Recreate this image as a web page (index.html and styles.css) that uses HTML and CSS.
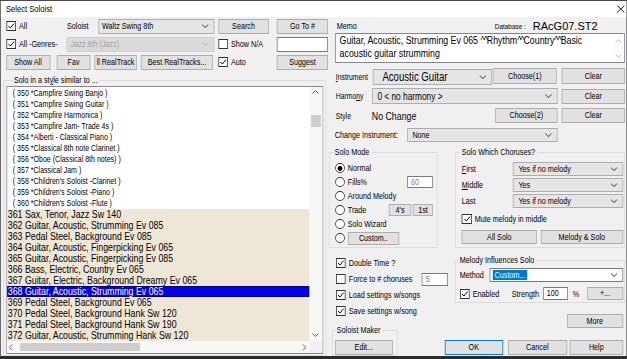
FILE: index.html
```html
<!doctype html>
<html lang="en">
  <head>
    <meta charset="UTF-8" />
    <title>Select Soloist</title>
    <link rel="stylesheet" href="styles.css">
  </head>
  <body>
    <div class="screen">
    <div class="window">
      <div class="titlebar">
        <span class="title">Select Soloist</span>
        <svg class="close" viewBox="0 0 10 8" preserveAspectRatio="none"><path d="M0.5 0.5 L9.5 7.5 M9.5 0.5 L0.5 7.5" /></svg>
      </div>

      <div class="dialog">
        <!-- left: filters + soloist list -->
        <div class="col-left">
          <div class="row top-row">
            <label class="chk all-chk"><span class="box"><svg viewBox="0 0 10 10" preserveAspectRatio="none"><polyline points="1.5,5 4,7.5 8.5,2" /></svg></span>All</label>
            <span class="soloist-lbl">Soloist</span>
            <div class="combo soloist-combo"><span class="val">Waltz Swing 8th</span><svg class="chev" viewBox="0 0 7 4" preserveAspectRatio="none"><polyline points="0.5,0.5 3.5,3.5 6.5,0.5" /></svg></div>
            <button class="btn search-btn">Search</button>
            <button class="btn goto-btn">Go To #</button>
          </div>
          <div class="row top-row">
            <label class="chk genres-chk"><span class="box"><svg viewBox="0 0 10 10" preserveAspectRatio="none"><polyline points="1.5,5 4,7.5 8.5,2" /></svg></span>All -Genres-</label>
            <div class="combo disabled genre-combo"><span class="val">Jazz 8th (Jazz)</span><svg class="chev" viewBox="0 0 7 4" preserveAspectRatio="none"><polyline points="0.5,0.5 3.5,3.5 6.5,0.5" /></svg></div>
            <label class="chk na-chk"><span class="box"></span>Show N/A</label>
            <div class="field goto-field"></div>
          </div>
          <div class="row top-row">
            <button class="btn showall-btn">Show All</button>
            <button class="btn fav-btn">Fav</button>
            <button class="btn rt-btn">ll RealTrack</button>
            <button class="btn best-btn">Best RealTracks...</button>
            <label class="chk auto-chk"><span class="box"><svg viewBox="0 0 10 10" preserveAspectRatio="none"><polyline points="1.5,5 4,7.5 8.5,2" /></svg></span>Auto</label>
            <button class="btn suggest-btn">Suggest</button>
          </div>

          <fieldset class="group list-group">
            <legend>Solo in a st<u>y</u>le similar to ...</legend>
            <div class="list-wrap">
              <div class="listbox">
                <div class="items">
                  <div class="item old">( 350 *Campfire Swing Banjo )</div>
                  <div class="item old">( 351 *Campfire Swing Guitar )</div>
                  <div class="item old">( 352 *Campfire Harmonica )</div>
                  <div class="item old">( 353 *Campfire Jam- Trade 4s )</div>
                  <div class="item old">( 354 *Alberti - Classical Piano )</div>
                  <div class="item old">( 355 *Classical 8th note Clarinet )</div>
                  <div class="item old">( 356 *Oboe (Classical 8th notes) )</div>
                  <div class="item old">( 357 *Classical Jam )</div>
                  <div class="item old">( 358 *Children's Soloist -Clarinet )</div>
                  <div class="item old">( 359 *Children's Soloist -Piano )</div>
                  <div class="item old">( 360 *Children's Soloist -Flute )</div>
                  <div class="item rt">361 Sax, Tenor, Jazz Sw 140</div>
                  <div class="item rt">362 Guitar, Acoustic, Strumming Ev 085</div>
                  <div class="item rt">363 Pedal Steel, Background Ev 085</div>
                  <div class="item rt">364 Guitar, Acoustic, Fingerpicking Ev 065</div>
                  <div class="item rt">365 Guitar, Acoustic, Fingerpicking Ev 085</div>
                  <div class="item rt">366 Bass, Electric, Country Ev 065</div>
                  <div class="item rt">367 Guitar, Electric, Background Dreamy Ev 065</div>
                  <div class="item rt selected">368 Guitar, Acoustic, Strumming Ev 065</div>
                  <div class="item rt">369 Pedal Steel, Background Ev 065</div>
                  <div class="item rt">370 Pedal Steel, Background Hank Sw 120</div>
                  <div class="item rt">371 Pedal Steel, Background Hank Sw 190</div>
                  <div class="item rt">372 Guitar, Acoustic, Strumming Hank Sw 120</div>
                </div>
                <div class="vscroll">
                  <svg class="arrow-v" viewBox="0 0 7 4" preserveAspectRatio="none"><polyline points="0.5,3.5 3.5,0.5 6.5,3.5" /></svg>
                  <div class="vthumb"></div>
                  <svg class="arrow-v" viewBox="0 0 7 4" preserveAspectRatio="none"><polyline points="0.5,0.5 3.5,3.5 6.5,0.5" /></svg>
                </div>
                <div class="hscroll">
                  <svg class="arrow-h" viewBox="0 0 4 7" preserveAspectRatio="none"><polyline points="3.5,0.5 0.5,3.5 3.5,6.5" /></svg>
                  <div class="hthumb"></div>
                  <svg class="arrow-h" viewBox="0 0 4 7" preserveAspectRatio="none"><polyline points="0.5,0.5 3.5,3.5 0.5,6.5" /></svg>
                </div>
                <div class="corner"></div>
              </div>
            </div>
          </fieldset>
        </div>

        <!-- right: memo + settings -->
        <div class="col-right">
          <div class="row memo-head">
            <span class="memo-lbl">Memo</span>
            <span class="db-lbl">Database :</span>
            <span class="db-val">RAcG07.ST2</span>
          </div>
          <div class="memo">
            <div class="memo-text">Guitar, Acoustic, Strumming Ev 065 <span class="hat">^^</span>Rhythm<span class="hat">^^</span>Country<span class="hat">^^</span>Basic<br>acoustic guitar strumming</div>
            <div class="memo-scroll">
              <svg class="arrow-v" viewBox="0 0 7 4" preserveAspectRatio="none"><polyline points="0.5,3.5 3.5,0.5 6.5,3.5" /></svg>
              <svg class="arrow-v" viewBox="0 0 7 4" preserveAspectRatio="none"><polyline points="0.5,0.5 3.5,3.5 6.5,0.5" /></svg>
            </div>
          </div>

          <div class="row instr-row">
            <span class="side-lbl instr-lbl"><u>I</u>nstrument</span>
            <div class="combo instr-combo"><span class="val">Acoustic Guitar</span><svg class="chev" viewBox="0 0 7 4" preserveAspectRatio="none"><polyline points="0.5,0.5 3.5,3.5 6.5,0.5" /></svg></div>
            <button class="btn choose1-btn">Choose(1)</button>
            <button class="btn clear-btn">Clear</button>
          </div>
          <div class="row harm-row">
            <span class="side-lbl">Harmo<u>n</u>y</span>
            <div class="combo harm-combo"><span class="val">0 &lt; no harmony &gt;</span><svg class="chev" viewBox="0 0 7 4" preserveAspectRatio="none"><polyline points="0.5,0.5 3.5,3.5 6.5,0.5" /></svg></div>
            <button class="btn clear-btn">Clear</button>
          </div>
          <div class="row style-row">
            <span class="side-lbl">Style</span>
            <span class="style-val">No Change</span>
            <button class="btn choose2-btn">Choose(2)</button>
            <button class="btn clear-btn">Clear</button>
          </div>
          <div class="row change-row">
            <span class="change-lbl">Change Instrument:</span>
            <div class="combo change-combo"><span class="val">None</span><svg class="chev" viewBox="0 0 7 4" preserveAspectRatio="none"><polyline points="0.5,0.5 3.5,3.5 6.5,0.5" /></svg></div>
          </div>

          <div class="middle">
            <fieldset class="group mode-group">
              <legend>Solo Mode</legend>
              <div class="mode-body">
                <div class="opt"><span class="radio on"></span>Normal</div>
                <div class="opt"><span class="radio"></span>Fills%<span class="field fills-field">60</span></div>
                <div class="opt"><span class="radio"></span>Around Melody</div>
                <div class="opt"><span class="radio"></span>Trade<button class="btn mini fours-btn">4's</button><button class="btn mini first-btn">1st</button></div>
                <div class="opt"><span class="radio"></span>Solo Wizard</div>
                <div class="opt"><span class="radio"></span><button class="btn custom-btn">Custom..</button></div>
              </div>
            </fieldset>

            <fieldset class="group chorus-group">
              <legend>Solo Which Choruses?</legend>
              <div class="chorus-body">
                <div class="crow"><span class="clbl"><u>F</u>irst</span><div class="combo chorus-combo"><span class="val">Yes if no melody</span><svg class="chev" viewBox="0 0 7 4" preserveAspectRatio="none"><polyline points="0.5,0.5 3.5,3.5 6.5,0.5" /></svg></div></div>
                <div class="crow"><span class="clbl"><u>M</u>iddle</span><div class="combo chorus-combo"><span class="val">Yes</span><svg class="chev" viewBox="0 0 7 4" preserveAspectRatio="none"><polyline points="0.5,0.5 3.5,3.5 6.5,0.5" /></svg></div></div>
                <div class="crow"><span class="clbl">Last</span><div class="combo chorus-combo"><span class="val">Yes if no melody</span><svg class="chev" viewBox="0 0 7 4" preserveAspectRatio="none"><polyline points="0.5,0.5 3.5,3.5 6.5,0.5" /></svg></div></div>
                <label class="chk mute-chk"><span class="box"><svg viewBox="0 0 10 10" preserveAspectRatio="none"><polyline points="1.5,5 4,7.5 8.5,2" /></svg></span>Mute melody in middle</label>
                <div class="chorus-btns">
                  <button class="btn allsolo-btn">All Solo</button>
                  <button class="btn melsolo-btn">Melody &amp; Solo</button>
                </div>
              </div>
            </fieldset>
          </div>

          <div class="lower">
            <div class="lower-left">
              <label class="chk opt2"><span class="box"><svg viewBox="0 0 10 10" preserveAspectRatio="none"><polyline points="1.5,5 4,7.5 8.5,2" /></svg></span>Double Time ?</label>
              <label class="chk opt2"><span class="box"></span>Force to # choruses<span class="field force-field">5</span></label>
              <label class="chk opt2"><span class="box"><svg viewBox="0 0 10 10" preserveAspectRatio="none"><polyline points="1.5,5 4,7.5 8.5,2" /></svg></span>Load settings w/songs</label>
              <label class="chk opt2"><span class="box"><svg viewBox="0 0 10 10" preserveAspectRatio="none"><polyline points="1.5,5 4,7.5 8.5,2" /></svg></span>Save settings w/song</label>
              <fieldset class="group maker-group">
                <legend>Soloist Maker</legend>
                <div class="maker-body"><button class="btn edit-btn">Edit...</button></div>
              </fieldset>
            </div>

            <div class="lower-right">
              <fieldset class="group melody-group">
                <legend>Melody Influences Solo</legend>
                <div class="melody-body">
                  <div class="row method-row">
                    <span class="method-lbl">Method</span>
                    <div class="combo edit-combo"><span class="val"><span class="hilite">Custom...</span></span><svg class="chev" viewBox="0 0 7 4" preserveAspectRatio="none"><polyline points="0.5,0.5 3.5,3.5 6.5,0.5" /></svg></div>
                  </div>
                  <div class="row enabled-row">
                    <label class="chk enabled-chk"><span class="box"><svg viewBox="0 0 10 10" preserveAspectRatio="none"><polyline points="1.5,5 4,7.5 8.5,2" /></svg></span>Enabled</label>
                    <span class="strength-lbl">Strength</span>
                    <span class="field strength-field">100</span>
                    <span class="pct">%</span>
                    <button class="btn plus-btn">+...</button>
                  </div>
                </div>
              </fieldset>
              <button class="btn more-btn">More</button>
              <div class="final-btns">
                <button class="btn default ok-btn">OK</button>
                <button class="btn cancel-btn">Cancel</button>
                <button class="btn help-btn">Help</button>
              </div>
            </div>
          </div>
        </div>
      </div>
    </div>
    </div>
  </body>
</html>
```

FILE: styles.css
```css
* {
  box-sizing: border-box;
}
body {
  margin: 0;
  background: #fff;
  font-family: "Liberation Sans", Arial, sans-serif;
  font-size: 9px;
  color: #000;
  overflow: hidden;
}
u {
  text-decoration-thickness: 1px;
}
.screen {
  width: 627px;
  height: 359px;
  overflow: hidden;
}

/* the dialog is drawn with the narrow look of the capture: laid out 25% wider, then squeezed */
.window {
  width: 783.75px;
  height: 359px;
  border: 1px solid #4a4a4a;
  border-bottom: 3px solid #2b2b2b;
  background: #f0f0f0;
  overflow: hidden;
  display: flex;
  flex-direction: column;
  white-space: nowrap;
  transform: scaleX(0.8);
  transform-origin: 0 0;
}
.titlebar {
  flex: none;
  height: 16px;
  background: #fff;
  display: flex;
  align-items: center;
  justify-content: space-between;
  padding: 0 2px 1px 6.5px;
}
.title {
  font-size: 9.5px;
}
.close {
  width: 10px;
  height: 8px;
  stroke: #000;
  stroke-width: 1;
  fill: none;
  margin-top: 1px;
}
.dialog {
  flex: 1;
  display: flex;
  min-height: 0;
}
.col-left {
  width: 410px;
  flex: none;
  display: flex;
  flex-direction: column;
}
.col-right {
  width: 371.75px;
  flex: none;
  display: flex;
  flex-direction: column;
}
.row {
  display: flex;
  align-items: center;
  flex: none;
}

/* common controls */
.btn {
  font: inherit;
  height: 15px;
  padding: 0;
  border: 1px solid #adadad;
  background: #e1e1e1;
  color: #000;
  line-height: 13px;
  text-align: center;
  white-space: nowrap;
  overflow: hidden;
  flex: none;
}
.btn.default {
  border-color: #0078d7;
}
.combo {
  flex: none;
  display: flex;
  align-items: center;
  height: 15px;
  border: 1px solid #adadad;
  background: #e5e5e5;
}
.combo .val {
  flex: 1;
  padding-left: 5px;
  overflow: hidden;
}
.combo.disabled {
  background: #dadada;
  border-color: #cfcfcf;
  color: #a0a0a0;
}
.chev {
  flex: none;
  width: 9px;
  height: 4px;
  margin-right: 6px;
  fill: none;
  stroke: #606060;
  stroke-width: 1;
}
.combo.disabled .chev {
  stroke: #b8b8b8;
}
.field {
  flex: none;
  height: 15px;
  border: 1px solid #7a7a7a;
  background: #fff;
  padding-left: 4px;
  line-height: 13px;
  color: #808080;
}
.chk {
  display: flex;
  align-items: center;
  flex: none;
}
.box {
  flex: none;
  width: 12.5px;
  height: 10px;
  border: 1px solid #333;
  background: #fff;
  margin-right: 3.75px;
  display: flex;
  align-items: center;
  justify-content: center;
}
.box svg {
  width: 10px;
  height: 8px;
  fill: none;
  stroke: #000;
  stroke-width: 1.2;
}
.radio {
  flex: none;
  width: 12.5px;
  height: 10px;
  border: 1px solid #333;
  border-radius: 50%;
  background: #fff;
  margin-right: 3.75px;
  display: flex;
  align-items: center;
  justify-content: center;
}
.radio.on::after {
  content: "";
  width: 6.25px;
  height: 5px;
  border-radius: 50%;
  background: #000;
}
.group {
  margin: 0;
  padding: 0;
  border: 1px solid #dcdcdc;
  min-width: 0;
  flex: none;
}
.group legend {
  padding: 0 2px;
  height: 10px;
  line-height: 10px;
}

/* top filter rows */
.top-row {
  height: 16px;
  margin-top: 2px;
}
.top-row:first-child {
  margin-top: 1px;
}
.all-chk {
  margin-left: 6.5px;
  width: 76.25px;
}
.soloist-lbl {
  width: 38.75px;
  flex: none;
}
.soloist-combo {
  width: 145px;
}
.soloist-combo .val {
  padding-left: 4px;
}
.search-btn {
  margin-left: 5px;
  width: 63.75px;
}
.goto-btn {
  margin-left: 10px;
  width: 63.75px;
}
.genres-chk {
  margin-left: 6.5px;
  width: 75px;
}
.genre-combo {
  width: 185px;
}
.na-chk {
  margin-left: 5px;
  width: 73.75px;
}
.goto-field {
  width: 63.75px;
}
.showall-btn {
  margin-left: 6.5px;
  width: 55px;
}
.fav-btn {
  margin-left: 8.75px;
  width: 41.25px;
}
.rt-btn {
  margin-left: 5px;
  width: 53.75px;
}
.best-btn {
  margin-left: 5px;
  width: 90px;
}
.auto-chk {
  margin-left: 6.25px;
  width: 73.75px;
}
.suggest-btn {
  width: 63.75px;
}

/* soloist list */
.list-group {
  margin: 5px 0 0 2.75px;
  width: 403.75px;
}
.list-group legend {
  margin-left: 10.75px;
}
.list-wrap {
  padding: 1px 2.75px 1px;
}
.listbox {
  border: 1px solid #828790;
  background: #fff;
  display: grid;
  grid-template-columns: 1fr 16.25px;
  grid-template-rows: 254px 12px;
}
.items {
  padding-top: 1px;
  overflow: hidden;
}
.item {
  height: 11px;
  line-height: 11px;
  font-size: 8.8px;
  padding-left: 1.25px;
}
.item.old {
  padding-left: 7.5px;
}
.item.rt {
  background: #efe7d6;
  font-size: 11px;
}
.item.selected {
  background: #0000f5;
  color: #fff;
  box-shadow: inset 0 0 0 1px #00007a;
}
.vscroll {
  background: #f7f7f7;
  display: flex;
  flex-direction: column;
  align-items: center;
  padding: 3px 0 4px;
}
.vthumb {
  width: 12px;
  height: 12px;
  background: #cdcdcd;
  margin: 21px 0 auto;
}
.arrow-v {
  width: 8.75px;
  height: 4px;
  fill: none;
  stroke: #606060;
  stroke-width: 1;
}
.hscroll {
  background: #f7f7f7;
  display: flex;
  align-items: center;
  padding: 0 3.75px 0 2px;
}
.hthumb {
  width: 150px;
  height: 8px;
  background: #cdcdcd;
  margin: 0 auto 0 9.25px;
}
.arrow-h {
  width: 5px;
  height: 7px;
  fill: none;
  stroke: #606060;
  stroke-width: 1;
}
.corner {
  background: #f0f0f0;
}

/* memo */
.memo-head {
  height: 14px;
  margin-top: 2px;
}
.memo-lbl {
  margin-left: 10px;
  width: 197.5px;
  flex: none;
}
.db-lbl {
  width: 47.5px;
  flex: none;
  font-size: 8px;
}
.db-val {
  display: inline-block;
  font-size: 11px;
  transform: scaleX(1.25);
  transform-origin: 0 50%;
}
.memo {
  margin-left: 7.5px;
  width: 362.5px;
  height: 30px;
  flex: none;
  border: 1px solid #828790;
  background: #fff;
  display: flex;
}
.memo-text {
  flex: 1;
  padding-left: 5px;
  font-size: 11px;
  line-height: 13px;
}
.hat {
  letter-spacing: -1.2px;
}
.memo-scroll {
  width: 13.75px;
  display: flex;
  flex-direction: column;
  justify-content: space-between;
  align-items: center;
  padding: 5px 0 4px;
}
.memo-scroll .arrow-v {
  stroke: #b8b8b8;
}

/* instrument / harmony / style */
.side-lbl {
  margin-left: 8.75px;
  width: 45px;
  flex: none;
  font-size: 8.5px;
}
.instr-row {
  margin-top: 5px;
  height: 17px;
  align-items: flex-start;
}
.instr-lbl {
  width: 46.25px;
  align-self: center;
}
.instr-combo {
  width: 148.75px;
  height: 16px;
  margin-top: 1px;
  font-size: 12px;
}
.instr-combo .val {
  padding-left: 11px;
}
.choose1-btn {
  margin-left: 1.25px;
  width: 80px;
  height: 16px;
}
.clear-btn {
  margin-left: 5px;
  width: 78.75px;
}
.instr-row .clear-btn {
  margin-left: 6.25px;
  height: 16px;
}
.harm-row {
  margin-top: 3px;
  height: 16px;
}
.harm-combo {
  width: 232.5px;
  height: 16px;
  font-size: 10.4px;
}
.harm-combo .val {
  padding-left: 6px;
}
.style-row {
  margin-top: 4px;
  height: 15px;
}
.style-val {
  width: 153.75px;
  flex: none;
  font-size: 11px;
}
.choose2-btn {
  width: 78.75px;
}
.change-row {
  margin-top: 5px;
  height: 14px;
}
.change-lbl {
  margin-left: 7.5px;
  width: 90px;
  flex: none;
}
.change-combo {
  width: 188.75px;
  height: 14px;
}
.change-combo .val {
  padding-left: 6px;
}

/* solo mode + choruses */
.middle {
  margin-top: 5px;
  display: flex;
  flex: none;
}
.mode-group {
  width: 136.25px;
}
.mode-group legend {
  margin-left: 4.5px;
}
.mode-body {
  padding: 4px 5px 2px 6.5px;
}
.opt {
  height: 14px;
  display: flex;
  align-items: center;
}
.fills-field {
  margin-left: auto;
  width: 32.5px;
  height: 12px;
  line-height: 10px;
}
.btn.mini {
  height: 12px;
  line-height: 10px;
}
.fours-btn {
  margin-left: auto;
  width: 27.5px;
}
.first-btn {
  margin-left: 2.5px;
  width: 25px;
}
.custom-btn {
  width: 63.75px;
  height: 13px;
  line-height: 11px;
}
.chorus-group {
  margin-left: 21.25px;
  width: 212.5px;
}
.chorus-group legend {
  margin-left: 5.75px;
}
.chorus-body {
  padding: 4px 1.25px 3px 7.75px;
}
.crow {
  height: 16px;
  display: flex;
  align-items: center;
}
.clbl {
  width: 63.75px;
  flex: none;
}
.chorus-combo {
  width: 137.5px;
  height: 14px;
}
.chorus-combo .val {
  padding-left: 6px;
}
.mute-chk {
  margin-top: 3px;
  height: 14px;
}
.chorus-btns {
  margin-top: 4px;
  display: flex;
}
.allsolo-btn {
  width: 93.75px;
  height: 14px;
  line-height: 12px;
}
.melsolo-btn {
  margin-left: 5px;
  width: 102.5px;
  height: 14px;
  line-height: 12px;
}

/* lower part */
.lower {
  display: flex;
  flex: none;
}
.lower-left {
  width: 142.5px;
  flex: none;
  padding: 7px 0 0 8.75px;
}
.opt2 {
  height: 16px;
  width: 140px;
}
.force-field {
  margin-left: auto;
  width: 32.5px;
  height: 13px;
  line-height: 11px;
}
.maker-group {
  margin: 6px 0 0 -5px;
  width: 82.5px;
}
.maker-group legend {
  margin-left: 3.25px;
}
.maker-body {
  padding: 5px 0 0 2.75px;
}
.edit-btn {
  width: 72.5px;
}
.lower-right {
  flex: 1;
  display: flex;
  flex-direction: column;
  padding-top: 7px;
}
.melody-group {
  margin-left: 15px;
  width: 212.5px;
}
.melody-group legend {
  margin-left: 3.25px;
}
.melody-body {
  padding: 3px 1.25px 2px 5.25px;
}
.method-row {
  height: 14px;
}
.method-lbl {
  width: 37.5px;
  flex: none;
}
.edit-combo {
  width: 166.25px;
  height: 14px;
  background: #fff;
  border-color: #7a7a7a;
}
.edit-combo .val {
  padding-left: 3px;
}
.hilite {
  background: #0078d7;
  color: #fff;
  padding: 0 2px;
}
.enabled-row {
  margin-top: 5px;
  height: 13px;
}
.enabled-chk {
  width: 65px;
}
.strength-lbl {
  width: 38.75px;
  flex: none;
}
.strength-field {
  width: 31.25px;
  height: 13px;
  line-height: 11px;
  color: #000;
}
.pct {
  margin-left: 6.25px;
}
.plus-btn {
  margin-left: auto;
  width: 45px;
  height: 13px;
  line-height: 11px;
}
.more-btn {
  margin: 11px 0 0 155px;
  width: 70px;
  height: 14px;
  line-height: 12px;
  align-self: flex-start;
}
.final-btns {
  margin-top: 12px;
  display: flex;
}
.ok-btn {
  margin-left: 2.5px;
  width: 72.5px;
}
.cancel-btn {
  margin-left: 6.25px;
  width: 73.75px;
}
.help-btn {
  margin-left: 3.75px;
  width: 66.25px;
}
```
